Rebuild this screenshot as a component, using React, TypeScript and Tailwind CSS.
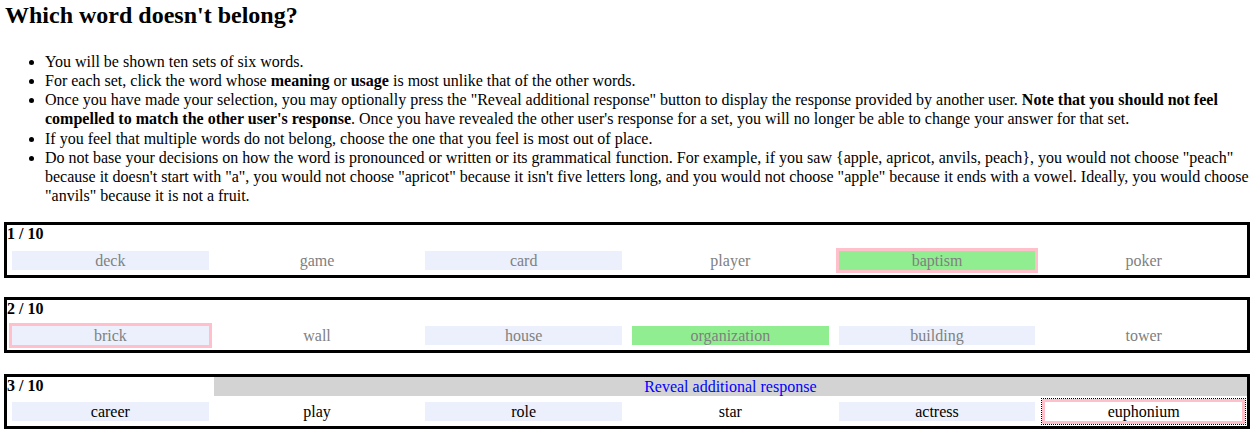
import React from 'react';

type WordSet = {
  index: number;
  words: string[];
  answered: boolean;
  selected?: number;
  other?: number;
  focused?: number;
};

const sets: WordSet[] = [
  { index: 1, words: ['deck', 'game', 'card', 'player', 'baptism', 'poker'], answered: true, selected: 4, other: 4 },
  { index: 2, words: ['brick', 'wall', 'house', 'organization', 'building', 'tower'], answered: true, selected: 0, other: 3 },
  { index: 3, words: ['career', 'play', 'role', 'star', 'actress', 'euphonium'], answered: false, selected: 5, focused: 5 },
];

const WordCell: React.FC<{
  word: string;
  position: number;
  set: WordSet;
}> = ({ word, position, set }) => {
  const isSelected = set.selected === position;
  const isOther = set.other === position;
  const isFocused = set.focused === position;
  const odd = position % 2 === 0;

  let bg = odd ? 'bg-[#ebf0fc]' : 'bg-white';
  if (isOther) bg = 'bg-[#90ee90]';
  if (isFocused) bg = 'bg-white';

  return (
    <div className="p-[5px]">
      <div
        className={[
          'h-[19px] text-center leading-[19px]',
          bg,
          set.answered ? 'text-[#808080]' : 'text-black',
          isSelected ? 'shadow-[0_0_0_3px_#ffc0cb]' : '',
          isFocused ? 'outline-1 outline-dotted outline-black outline-offset-[3px]' : '',
        ].join(' ')}
      >
        {word}
      </div>
    </div>
  );
};

const SetBox: React.FC<{ set: WordSet; className?: string }> = ({ set, className }) => {
  return (
    <div className={'border-[3px] border-black ' + (className || '')}>
      <div className={'grid grid-cols-6 ' + (set.answered ? 'h-[21px]' : 'h-[20px]')}>
        <div className="h-[19px] font-bold leading-[17px]">
          {set.index} / 10
        </div>
        {!set.answered && (
          <div className="col-span-5 h-[19px] bg-[#d3d3d3] text-center leading-[19px] text-[#0000ff]">
            Reveal additional response
          </div>
        )}
      </div>
      <div className="grid grid-cols-6">
        {set.words.map((w, i) => (
          <WordCell key={w} word={w} position={i} set={set} />
        ))}
      </div>
    </div>
  );
};

export default function App() {
  return (
    <div className="bg-white px-[4px] pt-[1px] text-[16px] text-black font-['Liberation_Serif','Times_New_Roman',serif]">
      <h2 className="pl-[1px] text-[24px] font-bold leading-[28px]">
        Which word doesn't belong?
      </h2>
      <ul className="mt-[23px] list-disc pl-[41px] leading-[19.15px]">
        <li>You will be shown ten sets of six words.</li>
        <li>
          For each set, click the word whose <b>meaning</b> or <b>usage</b> is most unlike that of the other words.
        </li>
        <li>
          Once you have made your selection, you may optionally press the "Reveal additional response" button to
          display the response provided by another user.{' '}
          <b>Note that you should not feel compelled to match the other user's response</b>. Once you have revealed
          the other user's response for a set, you will no longer be able to change your answer for that set.
        </li>
        <li>If you feel that multiple words do not belong, choose the one that you feel is most out of place.</li>
        <li>
          Do not base your decisions on how the word is pronounced or written or its grammatical function. For
          example, if you saw {'{'}apple, apricot, anvils, peach{'}'}, you would not choose "peach" because it doesn't
          start with "a", you would not choose "apricot" because it isn't five letters long, and you would not choose
          "apple" because it ends with a vowel. Ideally, you would choose "anvils" because it is not a fruit.
        </li>
      </ul>
      <div className="mt-[17px] flex flex-col pb-[7px]">
        <SetBox set={sets[0]} />
        <SetBox set={sets[1]} className="mt-[19px]" />
        <SetBox set={sets[2]} className="mt-[21px]" />
      </div>
    </div>
  );
}
